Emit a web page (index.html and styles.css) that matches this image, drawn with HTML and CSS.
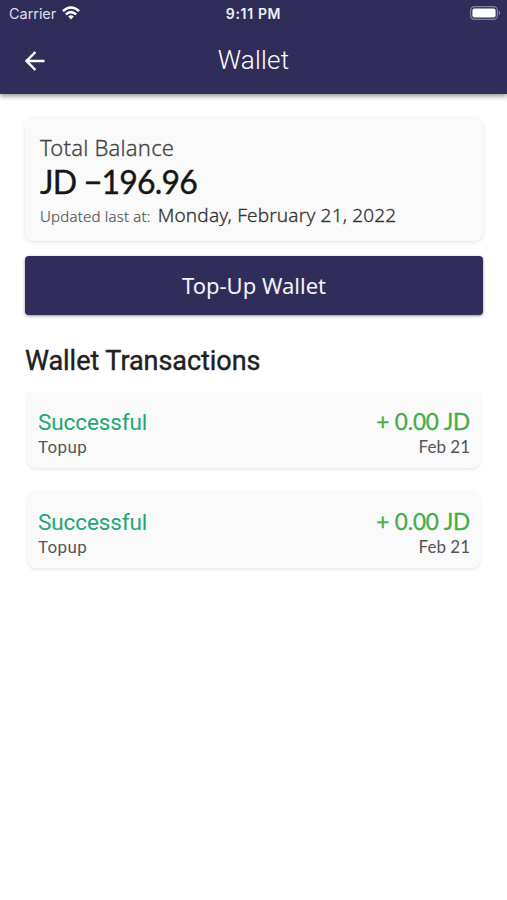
FILE: index.html
```html
<!DOCTYPE html>
<html lang="en">
<head>
<meta charset="utf-8">
<title>Wallet</title>
<link rel="stylesheet" href="styles.css">
</head>
<body>
<header class="header">
  <div class="status">
    <div class="carrier"><span class="carrier-name">Carrier</span>
      <svg class="wifi" viewBox="0 0 18 14" width="18" height="14"><g fill="none" stroke="#fff" stroke-width="2.5"><path d="M.9 5.2Q9-2.3 17.1 5.2"/><path d="M3.9 8.4Q9 3.9 14.1 8.4"/></g><path d="M6.2 10.4Q9 8.2 11.8 10.4L9 13.4Z" fill="#fff"/></svg>
    </div>
    <span class="time">9:11 PM</span>
    <svg class="battery" viewBox="0 0 31 14" width="31" height="14"><rect x=".6" y=".6" width="26.8" height="12.8" rx="3.8" fill="none" stroke="#8481a3" stroke-width="1.2"/><rect x="2.4" y="2.4" width="23.2" height="9.2" rx="2" fill="#fff"/><path d="M28.8 4.8q1.5.6 1.5 2.2t-1.5 2.2z" fill="#8481a3"/></svg>
  </div>
  <div class="nav">
    <svg class="back" viewBox="0 0 20 20" width="20" height="20"><path d="M19.5 10H2M10.4 1L1.6 10l8.8 9" fill="none" stroke="#fff" stroke-width="2.5"/></svg>
    <h1 class="title">Wallet</h1>
  </div>
</header>
<main class="main">
  <section class="balance">
    <div class="label">Total Balance</div>
    <div class="amount">JD −196.96</div>
    <div class="updated"><span class="updated-label">Updated last at:</span><span class="updated-date">Monday, February 21, 2022</span></div>
  </section>
  <button class="topup"><span>Top-Up Wallet</span></button>
  <h2 class="heading">Wallet Transactions</h2>
  <div class="list">
    <article class="item">
      <div class="row"><span class="state">Successful</span><span class="sum">+ 0.00 JD</span></div>
      <div class="row sub"><span class="kind">Topup</span><span class="day">Feb 21</span></div>
    </article>
    <article class="item">
      <div class="row"><span class="state">Successful</span><span class="sum">+ 0.00 JD</span></div>
      <div class="row sub"><span class="kind">Topup</span><span class="day">Feb 21</span></div>
    </article>
  </div>
</main>
</body>
</html>
```
FILE: styles.css
```css
* { box-sizing: border-box; }
body { margin: 0; min-height: 900px; background: #fff; color: #202020; font-family: "Noto Sans", sans-serif; white-space: nowrap; }
.header { height: 94px; background: #312d5b; color: #fff; box-shadow: 0 2px 5px rgba(0,0,0,.45); }
.status { height: 27px; display: grid; grid-template-columns: 1fr auto 1fr; align-items: center; padding: 0 6px 0 9px; font-family: Inter, sans-serif; }
.carrier { display: flex; align-items: center; gap: 6px; font-size: 14.5px; color: #deddea; }
.carrier-name { letter-spacing: -.05px; }
.wifi { margin-top: -2px; }
.time { margin-right: 3px; font-size: 14px; font-weight: 600; letter-spacing: .65px; color: #f1f0f7; }
.battery { justify-self: end; margin-top: -1px; }
.nav { height: 67px; display: grid; grid-template-columns: 1fr auto 1fr; align-items: center; padding: 0 25px; }
.title { margin: 0; font: 300 26px/63px Roboto, sans-serif; letter-spacing: .2px; }
.main { padding: 24px 24px 0 25px; }
.balance { height: 123px; padding: 15px; border-radius: 9px; background: #fafafa; box-shadow: 0 1px 4px rgba(0,0,0,.12); }
.label { font-size: 22px; font-weight: 300; line-height: 28px; color: #444; letter-spacing: .2px; -webkit-text-stroke: .3px #444; }
.amount { font-family: Lato, sans-serif; font-size: 32px; font-weight: 400; line-height: 41px; letter-spacing: -.8px; color: #161616; -webkit-text-stroke: .4px #161616; }
.updated { display: flex; align-items: baseline; gap: 7px; line-height: 26px; }
.updated-label { font-size: 15px; font-weight: 300; color: #555; letter-spacing: .2px; -webkit-text-stroke: .2px #555; }
.updated-date { font-size: 19px; font-weight: 300; color: #333; letter-spacing: .18px; -webkit-text-stroke: .3px #333; }
.topup { display: block; width: 458px; height: 59px; margin: 15px 0 0; padding: 0 0 2px; border: 0; border-radius: 4px; background: #312d5b; color: #f4f3fa; font: 400 22px "Noto Sans", sans-serif; box-shadow: 0 1px 3px rgba(0,0,0,.45); }
.heading { margin: 28px 0 0; font: 400 27px/36px Roboto, sans-serif; -webkit-text-stroke: .4px #202020; letter-spacing: -.05px; }
.list { display: grid; gap: 22px; margin-top: 13px; padding: 0 2px; }
.item { height: 78px; padding: 18px 11px 0; border-radius: 9px; background: #fafafa; box-shadow: 0 2px 3px rgba(0,0,0,.08); }
.item:first-child { height: 76px; padding-top: 16px; border-radius: 0 0 9px 9px; }
.row { display: flex; justify-content: space-between; align-items: baseline; line-height: 28px; font-size: 22.5px; }
.row.sub { line-height: 22px; font-size: 17px; color: #555; }
.state { color: #20a775; font-family: Roboto, sans-serif; letter-spacing: -.1px; }
.kind { font-family: Roboto, sans-serif; letter-spacing: .3px; }
.sum { color: #43ad47; font-family: Lato, sans-serif; letter-spacing: -.15px; -webkit-text-stroke: .3px #43ad47; }
.day { font-family: Lato, sans-serif; }
```
